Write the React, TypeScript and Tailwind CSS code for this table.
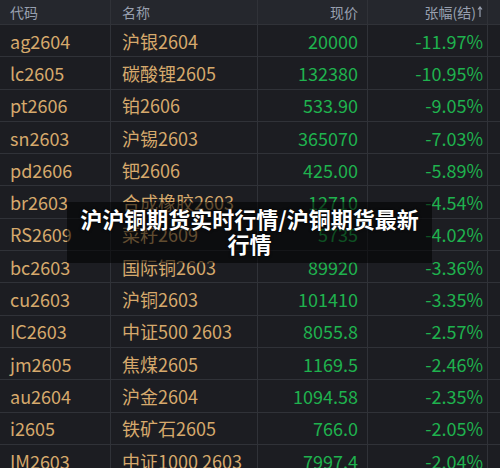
import React from 'react'

interface Row {
  code: string
  name: string
  price: string
  change: string
}

const rows: Row[] = [
  { code: 'ag2604', name: '沪银2604', price: '20000', change: '-11.97%' },
  { code: 'lc2605', name: '碳酸锂2605', price: '132380', change: '-10.95%' },
  { code: 'pt2606', name: '铂2606', price: '533.90', change: '-9.05%' },
  { code: 'sn2603', name: '沪锡2603', price: '365070', change: '-7.03%' },
  { code: 'pd2606', name: '钯2606', price: '425.00', change: '-5.89%' },
  { code: 'br2603', name: '合成橡胶2603', price: '12710', change: '-4.54%' },
  { code: 'RS2609', name: '菜籽2609', price: '5735', change: '-4.02%' },
  { code: 'bc2603', name: '国际铜2603', price: '89920', change: '-3.36%' },
  { code: 'cu2603', name: '沪铜2603', price: '101410', change: '-3.35%' },
  { code: 'IC2603', name: '中证500 2603', price: '8055.8', change: '-2.57%' },
  { code: 'jm2605', name: '焦煤2605', price: '1169.5', change: '-2.46%' },
  { code: 'au2604', name: '沪金2604', price: '1094.58', change: '-2.35%' },
  { code: 'i2605', name: '铁矿石2605', price: '766.0', change: '-2.05%' },
  { code: 'IM2603', name: '中证1000 2603', price: '7997.4', change: '-2.04%' },
]

const grid = 'grid grid-cols-[111px_147px_110px_120px_1fr]'
const cell = 'border-r border-[#303238] flex items-center'

export default function App() {
  return (
    <div
      className="relative w-[500px] h-[468px] overflow-hidden bg-[#1c1d22]"
      style={{ fontFamily: '"Noto Sans CJK SC", "Noto Sans", sans-serif' }}
    >
      <div className={`${grid} h-[24px] bg-[#25272d] text-[14px] text-[#98a0b0]`}>
        <div className={`${cell} pl-[10px]`}>代码</div>
        <div className={`${cell} pl-[11px]`}>名称</div>
        <div className={`${cell} justify-end pr-[9px]`}>现价</div>
        <div className={`${cell} justify-end pr-[4px]`}>
          张幅(结)
          <svg width="6" height="12" viewBox="0 0 6 12" className="ml-[1px]">
            <path d="M3 1 V11 M1 3.5 L3 1 L5 3.5" stroke="#98a0b0" strokeWidth="1.2" fill="none" />
          </svg>
        </div>
        <div />
      </div>
      {rows.map((r) => (
        <div
          key={r.code}
          className={`${grid} h-[32.3px] border-t border-[#303238] text-[18px] leading-none`}
        >
          <div className={`${cell} pl-[10px] text-[#d6a96c]`}>{r.code}</div>
          <div className={`${cell} pl-[11px] text-[#d6a96c]`}>{r.name}</div>
          <div className={`${cell} justify-end pr-[9px] text-[#1fb24e]`}>{r.price}</div>
          <div className={`${cell} justify-end pr-[4px] text-[#1fb24e]`}>{r.change}</div>
          <div />
        </div>
      ))}

      <div className="absolute left-[67px] top-[202px] w-[365px] pt-[4px] pb-[7px] bg-black/55 text-center text-white font-bold text-[22px] leading-[25px] [text-shadow:0_0_3px_rgba(0,0,0,0.9)]">
        沪沪铜期货实时行情/沪铜期货最新
        <br />
        行情
      </div>
    </div>
  )
}
